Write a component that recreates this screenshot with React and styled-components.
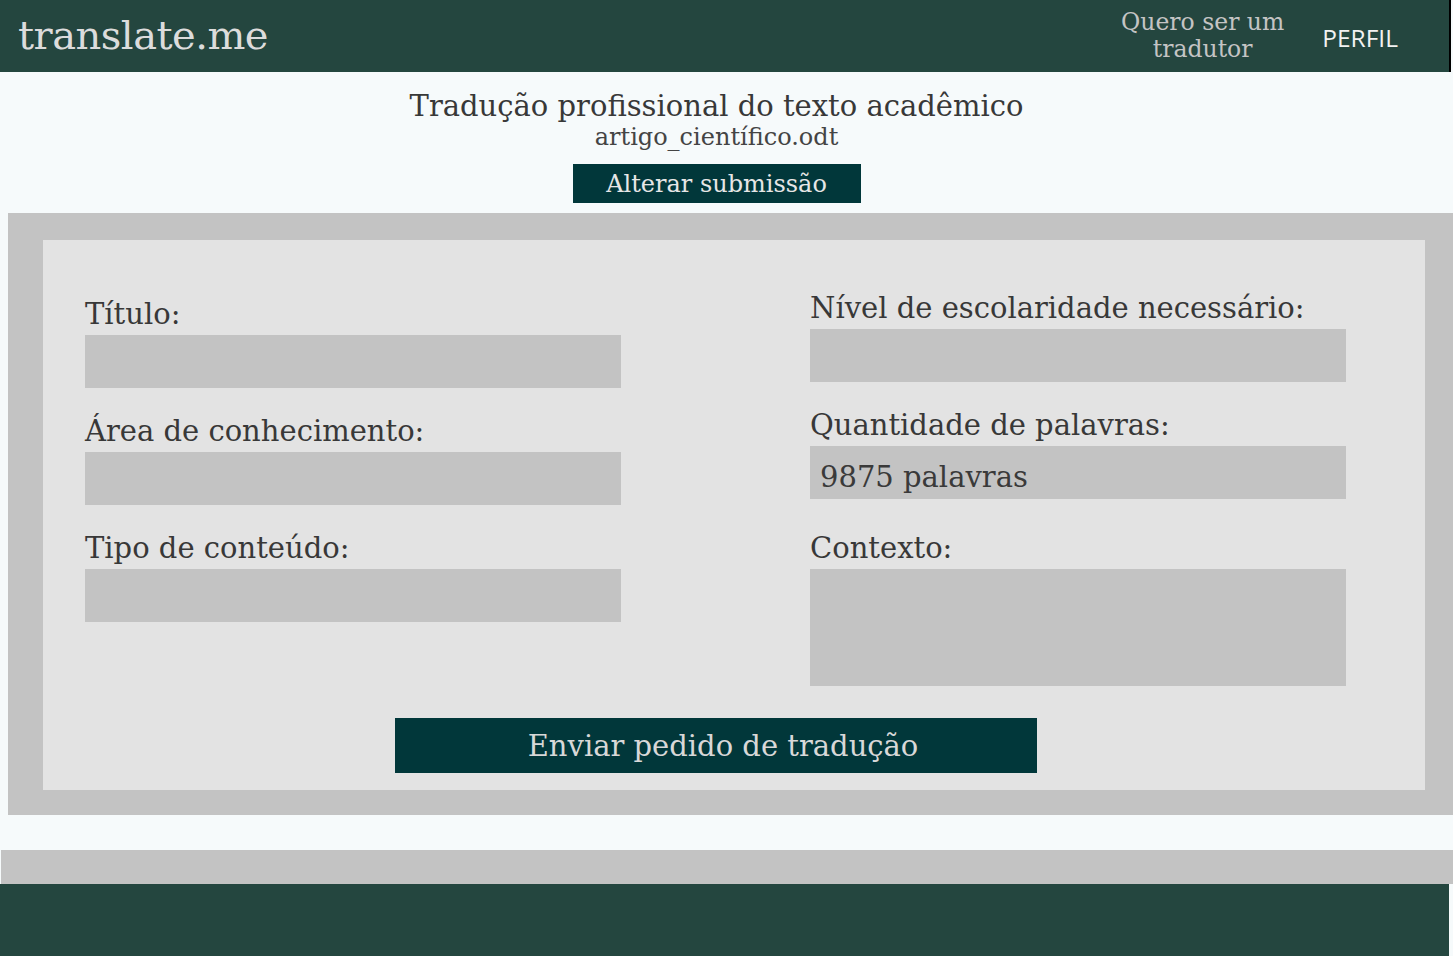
import React from 'react';
import styled, { createGlobalStyle } from 'styled-components';

const GlobalStyle = createGlobalStyle`
  body {
    margin: 0;
    background: #f6fafb;
    font-family: "DejaVu Serif", "Liberation Serif", serif;
    color: #333;
  }
`;

const fields = {
  left: [
    { label: 'Título:' },
    { label: 'Área de conhecimento:' },
    { label: 'Tipo de conteúdo:' },
  ],
  right: [
    { label: 'Nível de escolaridade necessário:' },
    { label: 'Quantidade de palavras:', value: '9875 palavras' },
    { label: 'Contexto:', tall: true },
  ],
};

const App = () => (
  <>
    <GlobalStyle />
    <Page>
      <Header>
        <Logo>translate.me</Logo>
        <Nav>
          <NavLink>
            Quero ser um
            <br />
            tradutor
          </NavLink>
          <ProfileLink>PERFIL</ProfileLink>
        </Nav>
      </Header>

      <Intro>
        <Title>Tradução profissional do texto acadêmico</Title>
        <FileName>artigo_científico.odt</FileName>
        <SmallButton type="button">Alterar submissão</SmallButton>
      </Intro>

      <OuterPanel>
        <InnerPanel>
          <FormGrid>
            <Column>
              {fields.left.map((f) => (
                <Field key={f.label}>
                  <Label>{f.label}</Label>
                  <Input>{f.value}</Input>
                </Field>
              ))}
            </Column>
            <Column $raised>
              {fields.right.map((f) => (
                <Field key={f.label} $tall={f.tall}>
                  <Label>{f.label}</Label>
                  <Input $tall={f.tall}>{f.value}</Input>
                </Field>
              ))}
            </Column>
          </FormGrid>
          <Actions>
            <SubmitButton type="button">Enviar pedido de tradução</SubmitButton>
          </Actions>
        </InnerPanel>
      </OuterPanel>

      <Band />
      <Footer />
    </Page>
  </>
);

export default App;

/* Styled Components */

const Page = styled.div`
  width: 1453px;
  min-height: 956px;
  overflow: hidden;
`;

const Header = styled.header`
  height: 72px;
  width: 1451px;
  border-right: 2px solid #000;
  background: #24463f;
  display: flex;
  align-items: center;
  justify-content: space-between;
  padding: 0 51px 0 18px;
  box-sizing: border-box;
`;

const Logo = styled.div`
  font-size: 40px;
  color: #dcdcdc;
  letter-spacing: -0.5px;
  padding-bottom: 2px;
`;

const Nav = styled.nav`
  display: flex;
  align-items: center;
  gap: 38px;
`;

const NavLink = styled.div`
  font-size: 23.5px;
  line-height: 27px;
  color: #c4c4c4;
  text-align: center;
`;

const ProfileLink = styled.div`
  font-family: "Open Sans", "Liberation Sans", sans-serif;
  font-size: 24.5px;
  color: #f2f2f2;
  padding-top: 2px;
`;

const Intro = styled.section`
  display: flex;
  flex-direction: column;
  align-items: center;
  padding: 16px 0 10px;
  margin-left: -20px;
`;

const Title = styled.h1`
  margin: 0;
  font-size: 29px;
  line-height: 36px;
  font-weight: normal;
  color: #383838;
`;

const FileName = styled.div`
  font-size: 24px;
  line-height: 26px;
  color: #444;
`;

const SmallButton = styled.button`
  margin-top: 14px;
  width: 288px;
  height: 39px;
  border: none;
  background: #01373a;
  color: #e6e6e6;
  font-family: inherit;
  font-size: 24px;
  cursor: pointer;
`;

const OuterPanel = styled.main`
  margin-left: 8px;
  background: #c3c3c3;
  padding: 27px 28px 25px 35px;
`;

const InnerPanel = styled.div`
  background: #e3e3e3;
  padding: 53px 79px 17px 42px;
`;

const FormGrid = styled.div`
  display: grid;
  grid-template-columns: 536px 536px;
  column-gap: 189px;
`;

const Column = styled.div`
  display: flex;
  flex-direction: column;
  gap: 28px;
  padding-top: ${(p) => (p.$raised ? '0' : '6px')};
`;

const Field = styled.div`
  display: flex;
  flex-direction: column;
  margin-top: ${(p) => (p.$tall ? '6px' : '0')};
`;

const Label = styled.label`
  font-size: 29px;
  line-height: 31px;
  padding-bottom: 5px;
  color: #383838;
`;

const Input = styled.div`
  height: ${(p) => (p.$tall ? '117px' : '53px')};
  background: #c3c3c3;
  box-sizing: border-box;
  padding: 11px 10px 0;
  font-size: 29px;
  line-height: 40px;
  color: #3a3a3a;
`;

const Actions = styled.div`
  display: flex;
  justify-content: center;
  width: 1262px;
  margin-top: 32px;
`;

const SubmitButton = styled.button`
  width: 642px;
  height: 55px;
  border: none;
  padding: 0 0 0 14px;
  background: #01373a;
  color: #d8d8d8;
  font-family: inherit;
  font-size: 29px;
  cursor: pointer;
`;

const Band = styled.div`
  margin: 35px 0 0 1px;
  height: 34px;
  background: #c3c3c3;
`;

const Footer = styled.footer`
  width: 1449px;
  height: 72px;
  background: #24463f;
`;
